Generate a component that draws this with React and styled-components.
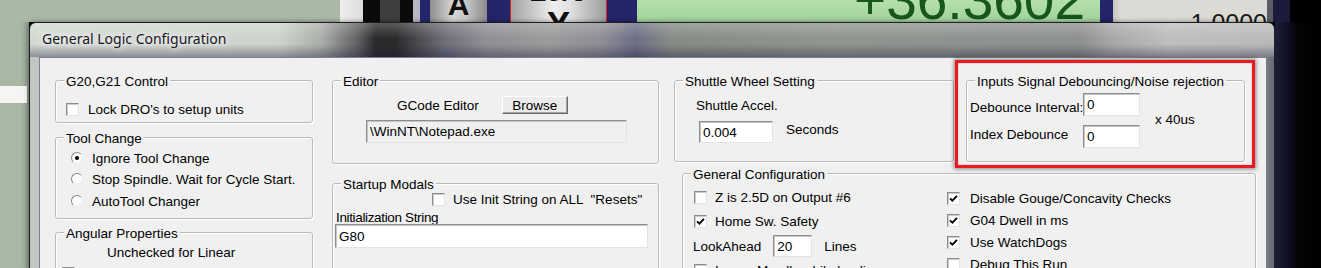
import React from 'react'
import styled, { createGlobalStyle } from 'styled-components'

const GlobalStyle = createGlobalStyle`
  html, body {
    margin: 0;
    padding: 0;
    background: #000;
  }
  body {
    font-family: "Liberation Sans", Arial, sans-serif;
    font-size: 13.5px;
    color: #000;
  }
  * {
    box-sizing: border-box;
  }
`

const Screen = styled.div`
  position: relative;
  width: 1321px;
  height: 268px;
  overflow: hidden;
  display: flex;
  flex-direction: column;
  background: #000;
`

/* ---------- Mach3 screen behind the dialog ---------- */

const TopStrip = styled.div`
  display: flex;
  height: 22px;
  flex-shrink: 0;
  overflow: hidden;
`

const SageArea = styled.div`
  flex: 0 0 340px;
  background: #a9b9a5;
`

const DarkBars = styled.div`
  flex: 0 0 90px;
  background: linear-gradient(
    to right,
    #eeeeee 0, #dcdcdc 23px,
    #0b0b0b 23px, #0b0b0b 40px,
    #3e3e3e 40px, #3e3e3e 60px,
    #0b0b0b 60px, #0b0b0b 73px,
    #b6b6c4 73px, #b6b6c4 80px,
    #25256c 80px
  );
`

const NavyGap = styled.div`
  flex: 0 0 ${p => p.w}px;
  background: ${p => p.dark ? '#1b1b3c' : '#24246a'};
`

const AxisButton = styled.div`
  flex: 0 0 57px;
  display: flex;
  justify-content: center;
  background: linear-gradient(to right, #8e8e8e, #d6d6d6 40%, #cacaca 62%, #8a8a8a);
`

const AxisLetter = styled.span`
  display: block;
  font-size: 30px;
  font-weight: bold;
  line-height: 30px;
  margin-top: -10px;
  color: #111;
`

const ZeroButton = styled.div`
  flex: 0 0 97px;
  display: flex;
  flex-direction: column;
  align-items: center;
  border-left: 1px solid #e02424;
  border-right: 1px solid #e02424;
  background: linear-gradient(to right, #a4a4a4, #eeeeee 45%, #e2e2e2 62%, #9c9c9c);
`

const ZeroWord = styled.span`
  display: block;
  font-size: 26px;
  font-weight: bold;
  line-height: 26px;
  margin-top: -21px;
  color: #111;
`

const ZeroAxis = styled.span`
  display: block;
  font-size: 36px;
  font-weight: bold;
  line-height: 36px;
  margin-top: 3px;
  color: #111;
`

const Dro = styled.div`
  flex: 0 0 463px;
  display: flex;
  justify-content: flex-end;
  padding-right: 15px;
  background: linear-gradient(to bottom, #b4e0ac, #a2d29a);
`

const DroValue = styled.span`
  display: block;
  font-size: 55px;
  line-height: 55px;
  margin-top: -27px;
  color: #17561d;
`

const ScaleBox = styled.div`
  flex: 0 0 154px;
  display: flex;
  justify-content: flex-end;
  background: linear-gradient(to right, #c8c6c0, #dddbd5 8px, #dcdad4);
`

const ScaleValue = styled.span`
  display: block;
  font-size: 25px;
  line-height: 25px;
  margin-top: 11px;
  color: #1a1a1a;
`

const EdgeLine = styled.div`
  flex: 0 0 6px;
  background: #5b5b64;
`

const BlackFill = styled.div`
  flex: 1;
  background: #000;
`

const BodyRow = styled.div`
  flex: 1;
  display: flex;
  min-height: 0;
`

const LeftSide = styled.div`
  flex: 0 0 29px;
  padding-top: 64px;
  background: linear-gradient(to right, #a8b8a4 0, #a8b8a4 21px, #8d988a 29px);
`

const WhiteBar = styled.div`
  height: 17px;
  width: 27px;
  background: #f5f6f4;
`

const RightSide = styled.div`
  flex: 1;
  background: linear-gradient(to right, #1e1e36 0, #101024 12px, #040406 22px, #000 100%);
`

/* ---------- dialog window ---------- */

const Window = styled.div`
  flex: 0 0 1246px;
  display: flex;
  flex-direction: column;
  border: 1px solid rgba(36, 36, 44, 0.85);
  border-bottom: none;
  border-radius: 7px 7px 0 0;
  overflow: hidden;
  box-shadow: 0 0 5px rgba(0, 0, 0, 0.45), inset 0 1px 0 rgba(255, 255, 255, 0.55);
`

const TitleBar = styled.div`
  height: 34px;
  flex-shrink: 0;
  display: flex;
  align-items: center;
  padding: 0 0 4px 12px;
  background:
    linear-gradient(to bottom, rgba(255, 255, 255, 0.22) 0%, rgba(255, 255, 255, 0) 45%, rgba(24, 24, 56, 0) 62%, rgba(24, 24, 56, 0.38) 100%),
    linear-gradient(
      to right,
      #d4d8d2 0px, #ced2cc 250px, #aaada9 292px, #606062 328px,
      #2c2c2e 345px, #2a2a2a 365px, #4d4d53 390px, #6e6e7a 415px,
      #8f8f94 455px, #9c9c9c 520px, #8c8c94 575px, #6d6d86 605px,
      #868b85 640px, #919590 800px, #8d908d 1050px, #a9a9a9 1085px,
      #bebebe 1140px, #b9b9b9 1244px
    );
`

const Title = styled.span`
  font-family: "Noto Sans", "Open Sans", sans-serif;
  font-size: 14px;
  color: #161628;
  white-space: nowrap;
  text-shadow: 0 0 6px #fff, 0 0 10px rgba(255, 255, 255, 0.9);
`

const FrameBody = styled.div`
  flex: 1;
  display: flex;
  min-height: 0;
  padding: 0 7px 0 9px;
  background: linear-gradient(to right, #c2c6c0 0, #c2c6c0 9px, #9c9c9e 50%, #7a7a86 calc(100% - 7px), #686876 100%);
`

const Client = styled.div`
  flex: 1;
  display: flex;
  align-items: flex-start;
  padding: 22px 0 0 15px;
  background: #f0f0f0;
  border: 1px solid #78828c;
  border-bottom: none;
`

const Column = styled.div`
  flex: 0 0 ${p => p.w}px;
  margin-left: ${p => p.ml || 0}px;
  display: flex;
  flex-direction: column;
`

const PairRow = styled.div`
  display: flex;
  gap: 12px;
`

const Group = styled.div`
  flex-shrink: 0;
  width: ${p => p.w}px;
  height: ${p => p.h}px;
  margin-top: ${p => p.mt || 0}px;
  margin-left: ${p => p.ml || 0}px;
  display: flex;
  flex-direction: column;
  border: 1px solid #bababa;
  border-radius: 3px;
  box-shadow: inset 1px 1px 0 #fff, 1px 1px 0 #fff;
`

const Legend = styled.div`
  align-self: flex-start;
  height: 16px;
  line-height: 16px;
  margin: -7px 0 0 8px;
  padding: 0 2px;
  background: #f0f0f0;
  white-space: nowrap;
`

const Row = styled.div`
  display: flex;
  align-items: center;
  flex-shrink: 0;
  height: ${p => p.h || 18}px;
  margin-top: ${p => p.mt || 0}px;
  padding-left: ${p => p.pl || 0}px;
  gap: ${p => (p.gap === undefined ? 8 : p.gap)}px;
  white-space: nowrap;
`

const Label = styled.span`
  white-space: nowrap;
  letter-spacing: ${p => p.tight ? '-0.35px' : 'normal'};
  padding-top: ${p => p.pt || 0}px;
  padding-bottom: ${p => p.pb || 0}px;
`

const CheckBox = styled.span`
  flex: 0 0 13px;
  width: 13px;
  height: 13px;
  display: flex;
  align-items: center;
  justify-content: center;
  background: #fff;
  border: 1px solid;
  border-color: #8c8c8c #e4e4e4 #e4e4e4 #8c8c8c;
  box-shadow: inset 1px 1px 0 #cdcdcd;
`

const RadioCircle = styled.span`
  flex: 0 0 12px;
  width: 12px;
  height: 12px;
  display: flex;
  align-items: center;
  justify-content: center;
  border-radius: 50%;
  background: #fbfbfb;
  border: 1px solid;
  border-color: #8a8a8a #ececec #ececec #8a8a8a;
`

const RadioDot = styled.span`
  width: 4px;
  height: 4px;
  border-radius: 50%;
  background: #000;
`

const Field = styled.div`
  flex: none;
  width: ${p => p.w}px;
  height: ${p => p.h}px;
  margin-left: ${p => p.ml || 0}px;
  margin-top: ${p => p.mt || 0}px;
  display: flex;
  align-items: center;
  padding-left: 3px;
  background: ${p => p.readOnly ? '#f0f0f0' : '#fff'};
  border: 1px solid;
  border-color: #8e8e8e #e3e3e3 #e3e3e3 #8e8e8e;
  box-shadow: inset 1px 1px 0 #c6c6c6;
  white-space: nowrap;
`

const PushButton = styled.div`
  flex: 0 0 66px;
  height: 18px;
  display: flex;
  align-items: center;
  justify-content: center;
  background: #ebebeb;
  border: 1px solid;
  border-color: #fdfdfd #6a6a6a #6a6a6a #fdfdfd;
  box-shadow: inset -1px -1px 0 #a3a3a3;
`

const DebounceBody = styled.div`
  display: flex;
  align-items: center;
  margin-top: 3px;
  padding-left: 3px;
`

const DebounceGrid = styled.div`
  display: grid;
  grid-template-columns: 113px 57px;
  grid-template-rows: 23px 23px;
  row-gap: 9px;
  align-items: center;
`

const Units = styled.span`
  margin-left: 15px;
  padding-bottom: 2px;
  white-space: nowrap;
`

const ConfigColumns = styled.div`
  display: flex;
  padding-left: 10px;
`

const ConfigColumn = styled.div`
  flex: 0 0 ${p => p.w}px;
  display: flex;
  flex-direction: column;
`

const Highlight = styled.div`
  position: absolute;
  left: 955px;
  top: 60px;
  width: 300px;
  height: 108px;
  border: 3px solid #ec1a20;
  box-shadow: 0 0 4px 1px rgba(0, 0, 0, 0.45), inset 0 0 2px rgba(0, 0, 0, 0.25);
  pointer-events: none;
`

const Tick = () => (
  <svg width="9" height="9" viewBox="0 0 9 9">
    <path d="M1 4.3 L3.4 6.7 L8 1.9" fill="none" stroke="#000" strokeWidth="1.9" />
  </svg>
)

const Check = ({ on }) => <CheckBox>{on && <Tick />}</CheckBox>

const Radio = ({ on }) => <RadioCircle>{on && <RadioDot />}</RadioCircle>

const App = () => {
  return (
    <Screen>
      <GlobalStyle />
      <TopStrip>
        <SageArea />
        <DarkBars />
        <AxisButton>
          <AxisLetter>A</AxisLetter>
        </AxisButton>
        <NavyGap w={23} />
        <ZeroButton>
          <ZeroWord>Zero</ZeroWord>
          <ZeroAxis>X</ZeroAxis>
        </ZeroButton>
        <NavyGap w={30} />
        <Dro>
          <DroValue>+36.3602</DroValue>
        </Dro>
        <NavyGap w={13} />
        <ScaleBox>
          <ScaleValue>1.0000</ScaleValue>
        </ScaleBox>
        <EdgeLine />
        <NavyGap w={17} dark />
        <BlackFill />
      </TopStrip>

      <BodyRow>
        <LeftSide>
          <WhiteBar />
        </LeftSide>

        <Window>
          <TitleBar>
            <Title>General Logic Configuration</Title>
          </TitleBar>
          <FrameBody>
            <Client>
              <Column w={258}>
                <Group w={258} h={43}>
                  <Legend>G20,G21 Control</Legend>
                  <Row mt={10} pl={10} gap={9}>
                    <Check />
                    <Label>Lock DRO's to setup units</Label>
                  </Row>
                </Group>

                <Group w={258} h={82} mt={14}>
                  <Legend>Tool Change</Legend>
                  <Row mt={2} pl={15} gap={9}>
                    <Radio on />
                    <Label>Ignore Tool Change</Label>
                  </Row>
                  <Row mt={3} pl={15} gap={9}>
                    <Radio />
                    <Label>Stop Spindle. Wait for Cycle Start.</Label>
                  </Row>
                  <Row mt={4} pl={15} gap={9}>
                    <Radio />
                    <Label>AutoTool Changer</Label>
                  </Row>
                </Group>

                <Group w={258} h={60} mt={13}>
                  <Legend>Angular Properties</Legend>
                  <Row mt={1} pl={51}>
                    <Label>Unchecked for Linear</Label>
                  </Row>
                  <Row mt={3} pl={6}>
                    <Check />
                  </Row>
                </Group>
              </Column>

              <Column w={327} ml={19}>
                <Group w={327} h={84}>
                  <Legend>Editor</Legend>
                  <Row mt={6} pl={64} gap={23}>
                    <Label>GCode Editor</Label>
                    <PushButton>Browse</PushButton>
                  </Row>
                  <Row h={23} mt={6} pl={33}>
                    <Field w={261} h={23} readOnly>{'\\WinNT\\Notepad.exe'}</Field>
                  </Row>
                </Group>

                <Group w={327} h={100} mt={19}>
                  <Legend>Startup Modals</Legend>
                  <Row h={16} mt={-2} pl={99}>
                    <Check />
                    <Label>Use Init String on ALL &nbsp;"Resets"</Label>
                  </Row>
                  <Row mt={1} pl={3}>
                    <Label tight>Initialization String</Label>
                  </Row>
                  <Field w={313} h={24} ml={2} mt={-2}>G80</Field>
                </Group>
              </Column>

              <Column w={582} ml={15}>
                <PairRow>
                  <Group w={280} h={82}>
                    <Legend>Shuttle Wheel Setting</Legend>
                    <Row mt={6} pl={21}>
                      <Label>Shuttle Accel.</Label>
                    </Row>
                    <Row h={22} mt={7} pl={24} gap={13}>
                      <Field w={74} h={22}>0.004</Field>
                      <Label pb={6}>Seconds</Label>
                    </Row>
                  </Group>

                  <Group w={279} h={82}>
                    <Legend>Inputs Signal Debouncing/Noise rejection</Legend>
                    <DebounceBody>
                      <DebounceGrid>
                        <Label pt={6}>Debounce Interval:</Label>
                        <Field w={57} h={23}>0</Field>
                        <Label pb={4}>Index Debounce</Label>
                        <Field w={57} h={23}>0</Field>
                      </DebounceGrid>
                      <Units>x 40us</Units>
                    </DebounceBody>
                  </Group>
                </PairRow>

                <Group w={574} h={120} mt={11} ml={8}>
                  <Legend>General Configuration</Legend>
                  <ConfigColumns>
                    <ConfigColumn w={254}>
                      <Row mt={5} pl={1}>
                        <Check />
                        <Label>Z is 2.5D on Output #6</Label>
                      </Row>
                      <Row mt={6} pl={1}>
                        <Check on />
                        <Label>Home Sw. Safety</Label>
                      </Row>
                      <Row h={22} mt={5} gap={12}>
                        <Label>LookAhead</Label>
                        <Field w={39} h={22}>20</Field>
                        <Label>Lines</Label>
                      </Row>
                      <Row mt={4} pl={1}>
                        <Check />
                        <Label>Ignore M calls while loading</Label>
                      </Row>
                    </ConfigColumn>
                    <ConfigColumn w={300}>
                      <Row mt={6} gap={10}>
                        <Check on />
                        <Label>Disable Gouge/Concavity Checks</Label>
                      </Row>
                      <Row mt={4} gap={10}>
                        <Check on />
                        <Label>G04 Dwell in ms</Label>
                      </Row>
                      <Row mt={4} gap={10}>
                        <Check on />
                        <Label>Use WatchDogs</Label>
                      </Row>
                      <Row mt={4} gap={10}>
                        <Check />
                        <Label>Debug This Run</Label>
                      </Row>
                    </ConfigColumn>
                  </ConfigColumns>
                </Group>
              </Column>
            </Client>
          </FrameBody>
        </Window>

        <RightSide />
      </BodyRow>

      <Highlight />
    </Screen>
  )
}

export default App
